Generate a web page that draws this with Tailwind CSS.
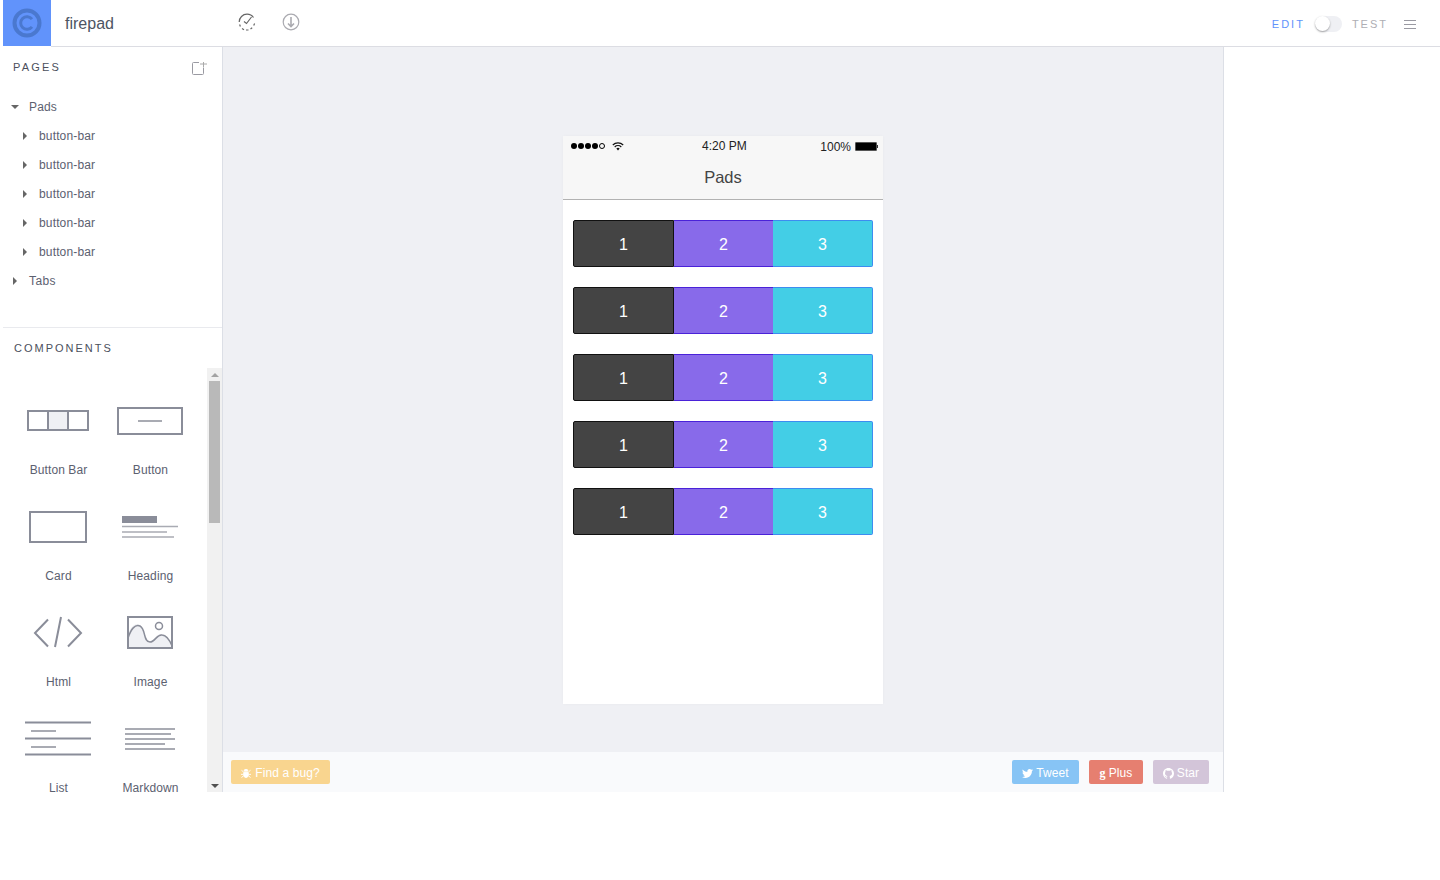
<!DOCTYPE html>
<html>

<head>
    <title>firepad</title>
    <script src="https://cdn.jsdelivr.net/npm/@tailwindcss/browser@4"></script>
</head>

<body class="bg-white font-['Liberation_Sans',Arial,sans-serif] overflow-hidden">
    <div class="h-[792px] w-[1440px] flex flex-col pl-[3px]">
        <!-- top bar -->
        <header class="h-[47px] flex shrink-0">
            <div class="w-[48px] h-[46px] bg-[#6193fb] flex items-center justify-center shrink-0">
                <svg width="30" height="30" viewBox="0 0 30 30" fill="none" stroke="#4a78cf">
                    <circle cx="15" cy="15" r="12.5" stroke-width="4"></circle>
                    <path d="M20 11.2a6.3 6.3 0 1 0 0 7.6" stroke-width="3"></path>
                </svg>
            </div>
            <div class="flex-1 flex items-center h-[47px] border-b border-[#dcdde3] pt-[2px]">
                <span class="ml-[14px] w-[173px] text-[16px] text-[#4d5563] -mt-[1px]">firepad</span>
                <svg class="-mt-[4px]" width="18" height="18" viewBox="0 0 18 18" fill="none" stroke="#666" stroke-width="1.2">
                    <path d="M15.5 4.5A7.8 7.8 0 0 0 9 1.2"></path>
                    <path d="M9 1.2a7.8 7.8 0 0 0-7.8 7.8"></path>
                    <path d="M1.6 11.5l.8 2M4 15.5l2 1.2M8 17h2.500M12.500 16l1.700-1.200M15.700 12.500l.900-2" stroke-dasharray="3 1.500"></path>
                    <path d="M6 8.500l2.500 2 5-6.500"></path>
                </svg>
                <svg class="ml-[26px] -mt-[5px]" width="18" height="18" viewBox="0 0 18 18" fill="none" stroke="#aaaab0" stroke-width="1.2">
                    <circle cx="9" cy="9" r="7.800"></circle>
                    <path d="M9 4v9M6 10.500L9 13.500l3-3" stroke-width="1.600"></path>
                </svg>
                <div class="ml-auto flex items-center">
                    <span class="text-[11px] tracking-[2px] text-[#6193fb]">EDIT</span>
                    <div class="ml-[10px] w-[27px] h-[16px] rounded-full bg-[#eff0f4] relative">
                        <div class="absolute left-0 top-0 w-[15px] h-[15px] rounded-full bg-white shadow-[0_1px_2px_rgba(0,0,0,0.35)]"></div>
                    </div>
                    <span class="ml-[10px] text-[11px] tracking-[2px] text-[#aeaeb4]">TEST</span>
                    <div class="ml-[16px] mr-[24px] w-[12px] flex flex-col gap-[3px]">
                        <div class="h-px bg-[#9a9aa2]"></div>
                        <div class="h-px bg-[#9a9aa2]"></div>
                        <div class="h-px bg-[#9a9aa2]"></div>
                    </div>
                </div>
            </div>
        </header>

        <div class="flex flex-1 min-h-0">
            <!-- sidebar -->
            <aside class="w-[220px] shrink-0 border-r border-[#dcdfe6] flex flex-col">
                <section class="h-[281px] shrink-0 border-b border-[#e9eaee]">
                    <div class="h-[40px] flex items-center justify-between pl-[10px] pr-[15px]">
                        <span class="text-[11px] tracking-[2.200px] text-[#4b4f5c]">PAGES</span>
                        <svg width="16" height="16" viewBox="0 0 16 16" fill="none" stroke="#9a9aa2">
                            <path d="M8 3.500H2.500a1 1 0 0 0-1 1V14.500a1 1 0 0 0 1 1H11.500a1 1 0 0 0 1-1V8.500"></path>
                            <path d="M12.500 3v5M9 5h7" stroke="#aaa"></path>
                        </svg>
                    </div>
                    <ul class="mt-[5px] text-[12px] tracking-[0.15px] text-[#5c6170]">
                        <li class="h-[29px] flex items-center">
                            <svg class="ml-[8px]" width="8" height="4" viewBox="0 0 8 4"><path d="M0 0h8L4 4z" fill="#666"></path></svg>
                            <span class="ml-[10px]">Pads</span>
                        </li>
                        <li class="h-[29px] flex items-center">
                            <svg class="ml-[20px]" width="4" height="8" viewBox="0 0 4 8"><path d="M0 0l4 4-4 4z" fill="#666"></path></svg>
                            <span class="ml-[12px]">button-bar</span>
                        </li>
                        <li class="h-[29px] flex items-center">
                            <svg class="ml-[20px]" width="4" height="8" viewBox="0 0 4 8"><path d="M0 0l4 4-4 4z" fill="#666"></path></svg>
                            <span class="ml-[12px]">button-bar</span>
                        </li>
                        <li class="h-[29px] flex items-center">
                            <svg class="ml-[20px]" width="4" height="8" viewBox="0 0 4 8"><path d="M0 0l4 4-4 4z" fill="#666"></path></svg>
                            <span class="ml-[12px]">button-bar</span>
                        </li>
                        <li class="h-[29px] flex items-center">
                            <svg class="ml-[20px]" width="4" height="8" viewBox="0 0 4 8"><path d="M0 0l4 4-4 4z" fill="#666"></path></svg>
                            <span class="ml-[12px]">button-bar</span>
                        </li>
                        <li class="h-[29px] flex items-center">
                            <svg class="ml-[20px]" width="4" height="8" viewBox="0 0 4 8"><path d="M0 0l4 4-4 4z" fill="#666"></path></svg>
                            <span class="ml-[12px]">button-bar</span>
                        </li>
                        <li class="h-[29px] flex items-center">
                            <svg class="ml-[10px]" width="4" height="8" viewBox="0 0 4 8"><path d="M0 0l4 4-4 4z" fill="#666"></path></svg>
                            <span class="ml-[12px] tracking-[0.4px]">Tabs</span>
                        </li>
                    </ul>
                </section>

                <section class="flex-1 min-h-0 flex flex-col">
                    <div class="h-[40px] shrink-0 flex items-center pl-[11px]">
                        <span class="text-[11px] tracking-[2px] text-[#4b4f5c]">COMPONENTS</span>
                    </div>
                    <div class="flex-1 min-h-0 flex">
                        <div class="flex-1 pl-[10px] pt-[22px] h-[424px]">
                            <div class="grid grid-cols-[92px_92px] auto-rows-[106px] text-[12px] tracking-[0.1px] text-[#5c6170] text-center">
                                <div>
                                    <svg width="92" height="60" viewBox="13 390 92 60" fill="none" stroke="#8a8d99" stroke-width="2">
                                        <rect x="48" y="411" width="20" height="19" fill="#eff0f4" stroke="none"></rect>
                                        <rect x="28" y="411" width="60" height="19"></rect>
                                        <path d="M48 411v19M68 411v19"></path>
                                    </svg>
                                    <p class="mt-[15px] leading-[10px] pr-px">Button Bar</p>
                                </div>
                                <div>
                                    <svg width="92" height="60" viewBox="105 390 92 60" fill="none" stroke="#8a8d99" stroke-width="2">
                                        <rect x="118" y="408" width="64" height="26"></rect>
                                        <path d="M138 421h24" stroke="#a9abb3"></path>
                                    </svg>
                                    <p class="mt-[15px] leading-[10px] pr-px">Button</p>
                                </div>
                                <div>
                                    <svg width="92" height="60" viewBox="13 496 92 60" fill="none" stroke="#8a8d99" stroke-width="2">
                                        <rect x="30" y="512" width="56" height="30"></rect>
                                    </svg>
                                    <p class="mt-[15px] leading-[10px] pr-px">Card</p>
                                </div>
                                <div>
                                    <svg width="92" height="60" viewBox="105 496 92 60" fill="none" stroke="#a9abb3" stroke-width="1.500">
                                        <rect x="122" y="516" width="35" height="7" fill="#8a8d99" stroke="none"></rect>
                                        <path d="M122 526.500h56M122 532h45M122 537h52"></path>
                                    </svg>
                                    <p class="mt-[15px] leading-[10px] pr-px">Heading</p>
                                </div>
                                <div>
                                    <svg width="92" height="60" viewBox="13 602 92 60" fill="none" stroke="#8a8d99" stroke-width="2">
                                        <path d="M48 619.500L35 633l13 13.500M68 619.500L81 633l-13 13.500M61 617l-6 30"></path>
                                    </svg>
                                    <p class="mt-[15px] leading-[10px] pr-px">Html</p>
                                </div>
                                <div>
                                    <svg width="92" height="60" viewBox="105 602 92 60" fill="none" stroke="#8a8d99" stroke-width="2">
                                        <path d="M128 648v-14c3-8 8-12 12-9 5 4 3 14 9 16 5 1 7-7 12-7 5 0 9 5 10 14z" fill="#eff0f4" stroke="none"></path>
                                        <rect x="128" y="617" width="44" height="31"></rect>
                                        <path d="M128 638c3-9 7-14 12-12 6 3 3 16 10 16 5 0 7-8 12-7 5 0 8 6 10 11" stroke-width="1.500"></path>
                                        <circle cx="159" cy="626" r="3.500" stroke-width="1.500"></circle>
                                    </svg>
                                    <p class="mt-[15px] leading-[10px] pr-px">Image</p>
                                </div>
                                <div>
                                    <svg width="92" height="60" viewBox="13 708 92 60" fill="none" stroke="#8a8d99" stroke-width="2">
                                        <path d="M25 722.500h66M25 738.500h66M25 754.500h66"></path>
                                        <path d="M31 731h25M31 747h25" stroke="#a9abb3"></path>
                                    </svg>
                                    <p class="mt-[15px] leading-[10px] pr-px">List</p>
                                </div>
                                <div>
                                    <svg width="92" height="60" viewBox="105 708 92 60" fill="none" stroke="#a9abb3" stroke-width="1.800">
                                        <path d="M125 729h50M125 734h46M125 739h50M125 744h40M125 749h50"></path>
                                    </svg>
                                    <p class="mt-[15px] leading-[10px] pr-px">Markdown</p>
                                </div>
                            </div>
                        </div>
                        <!-- scrollbar -->
                        <div class="w-[15px] shrink-0 bg-[#f1f1f1] flex flex-col items-center">
                            <div class="h-[13px] flex items-center justify-center">
                                <svg width="8" height="4" viewBox="0 0 8 4"><path d="M0 4l4-4 4 4z" fill="#a3a3a3"></path></svg>
                            </div>
                            <div class="w-[11px] h-[142px] bg-[#b9b9b9]"></div>
                            <div class="mt-auto h-[13px] flex items-center justify-center">
                                <svg width="8" height="4" viewBox="0 0 8 4"><path d="M0 0l4 4 4-4z" fill="#505050"></path></svg>
                            </div>
                        </div>
                    </div>
                </section>
            </aside>

            <!-- canvas -->
            <main class="w-[1000px] shrink-0 bg-[#eff0f4] flex flex-col">
                <div class="flex-1 min-h-0 flex justify-center items-start pt-[89px]">
                    <div class="w-[320px] h-[568px] bg-white shadow-[0_0_3px_rgba(0,0,0,0.03)]">
                        <div class="h-[64px] bg-[#f7f7f7] border-b border-[#b2b2b2]">
                            <div class="h-[20px] pl-[8px] pr-[5px] flex items-center justify-between relative text-[12px] text-[#222]">
                                <div class="flex items-center gap-[1px] w-[60px]">
                                    <span class="w-[6px] h-[6px] rounded-full bg-black"></span>
                                    <span class="w-[6px] h-[6px] rounded-full bg-black"></span>
                                    <span class="w-[6px] h-[6px] rounded-full bg-black"></span>
                                    <span class="w-[6px] h-[6px] rounded-full bg-black"></span>
                                    <span class="w-[6px] h-[6px] rounded-full border border-black"></span>
                                    <svg class="ml-[6px]" width="12" height="9" viewBox="0 0 12 9" fill="none" stroke="#111" stroke-width="1.200">
                                        <path d="M.8 3a7.500 7.500 0 0 1 10.400 0M2.700 5a4.800 4.800 0 0 1 6.600 0"></path>
                                        <path d="M4.300 6.600a2.400 2.400 0 0 1 3.400 0L6 8.500z" fill="#111" stroke="none"></path>
                                    </svg>
                                </div>
                                <span class="absolute left-[139px]">4:20 PM</span>
                                <div class="flex items-center gap-[4px]">
                                    <span class="mt-px">100%</span>
                                    <div class="flex items-center">
                                        <div class="w-[22px] h-[9px] bg-black border border-[#555] rounded-[1px]"></div>
                                        <div class="w-px h-[3px] bg-[#333]"></div>
                                    </div>
                                </div>
                            </div>
                            <div class="h-[43px] flex items-center justify-center text-[16.500px] text-[#444]">Pads</div>
                        </div>
                        <div class="px-[10px] pt-[20px] flex flex-col gap-[20px] text-[16px] text-white">
                            <div class="flex h-[47px] text-center leading-[47px]">
                                <div class="w-[101px] bg-[#444] border border-[#111] rounded-l-[2px]">1</div>
                                <div class="w-[99px] bg-[#886aea] border-y border-[#4a22d8]">2</div>
                                <div class="w-[100px] bg-[#43cee6] border border-l-0 border-[#3d8cf0] rounded-r-[2px]">3</div>
                            </div>
                            <div class="flex h-[47px] text-center leading-[47px]">
                                <div class="w-[101px] bg-[#444] border border-[#111] rounded-l-[2px]">1</div>
                                <div class="w-[99px] bg-[#886aea] border-y border-[#4a22d8]">2</div>
                                <div class="w-[100px] bg-[#43cee6] border border-l-0 border-[#3d8cf0] rounded-r-[2px]">3</div>
                            </div>
                            <div class="flex h-[47px] text-center leading-[47px]">
                                <div class="w-[101px] bg-[#444] border border-[#111] rounded-l-[2px]">1</div>
                                <div class="w-[99px] bg-[#886aea] border-y border-[#4a22d8]">2</div>
                                <div class="w-[100px] bg-[#43cee6] border border-l-0 border-[#3d8cf0] rounded-r-[2px]">3</div>
                            </div>
                            <div class="flex h-[47px] text-center leading-[47px]">
                                <div class="w-[101px] bg-[#444] border border-[#111] rounded-l-[2px]">1</div>
                                <div class="w-[99px] bg-[#886aea] border-y border-[#4a22d8]">2</div>
                                <div class="w-[100px] bg-[#43cee6] border border-l-0 border-[#3d8cf0] rounded-r-[2px]">3</div>
                            </div>
                            <div class="flex h-[47px] text-center leading-[47px]">
                                <div class="w-[101px] bg-[#444] border border-[#111] rounded-l-[2px]">1</div>
                                <div class="w-[99px] bg-[#886aea] border-y border-[#4a22d8]">2</div>
                                <div class="w-[100px] bg-[#43cee6] border border-l-0 border-[#3d8cf0] rounded-r-[2px]">3</div>
                            </div>
                        </div>
                    </div>
                </div>
                <div class="h-[40px] shrink-0 bg-[#f9fafc] flex items-center pl-[8px] pr-[14px] text-[12px] tracking-[0.1px] text-white">
                    <a class="w-[99px] h-[24px] pt-[2px] bg-[#f9d58f] rounded-[2px] flex items-center justify-center gap-[4px]">
                        <svg width="10" height="10" viewBox="0 0 11 11" fill="#fff" stroke="#fff">
                            <path d="M3 5h5v2.500a2.500 3 0 0 1-5 0z"></path>
                            <path d="M3.500 3a2 1.500 0 0 1 4 0v.500h-4z"></path>
                            <path d="M0.500 2.500L3 4.500M10.500 2.500L8 4.500M0 7h3M11 7H8M.5 10.500L3 8.500M10.500 10.500L8 8.500"></path>
                        </svg>
                        Find a bug?
                    </a>
                    <a class="ml-auto w-[67px] h-[24px] pt-[2px] bg-[#87c4f5] rounded-[2px] flex items-center justify-center gap-[3px]">
                        <svg width="11" height="11" viewBox="0 0 24 24" fill="#fff"><path d="M23.953 4.570a10 10 0 01-2.825.775 4.958 4.958 0 002.163-2.723c-.951.555-2.005.959-3.127 1.184a4.920 4.920 0 00-8.384 4.482C7.690 8.095 4.067 6.130 1.640 3.162a4.822 4.822 0 00-.666 2.475c0 1.710.870 3.213 2.188 4.096a4.904 4.904 0 01-2.228-.616v.060a4.923 4.923 0 003.946 4.827 4.996 4.996 0 01-2.212.085 4.936 4.936 0 004.604 3.417 9.867 9.867 0 01-6.102 2.105c-.390 0-.779-.023-1.170-.067a13.995 13.995 0 007.557 2.209c9.053 0 13.998-7.496 13.998-13.985 0-.210 0-.420-.015-.630A9.935 9.935 0 0024 4.590z"></path></svg>
                        Tweet
                    </a>
                    <a class="ml-[10px] w-[54px] h-[24px] pt-[2px] bg-[#e67f70] rounded-[2px] flex items-center justify-center gap-[3px]">
                        <span class="font-['Liberation_Serif',serif] font-bold">g</span>
                        Plus
                    </a>
                    <a class="ml-[10px] w-[56px] h-[24px] pt-[2px] bg-[#d3c5d9] rounded-[2px] flex items-center justify-center gap-[3px]">
                        <svg width="11" height="11" viewBox="0 0 16 16" fill="#fff"><path d="M8 0C3.580 0 0 3.580 0 8c0 3.540 2.290 6.530 5.470 7.590.400.070.550-.170.550-.380 0-.190-.010-.820-.010-1.490-2.010.370-2.530-.490-2.690-.940-.090-.230-.480-.940-.820-1.130-.280-.150-.680-.520-.010-.530.630-.010 1.080.580 1.230.820.720 1.210 1.870.870 2.330.660.070-.520.280-.870.510-1.070-1.780-.200-3.640-.890-3.640-3.950 0-.870.310-1.590.820-2.150-.080-.200-.360-1.020.080-2.120 0 0 .670-.210 2.200.820.640-.180 1.320-.270 2-.270.680 0 1.360.090 2 .270 1.530-1.040 2.200-.820 2.200-.820.440 1.100.160 1.920.080 2.120.510.560.820 1.270.820 2.150 0 3.070-1.870 3.750-3.650 3.950.290.250.540.730.540 1.480 0 1.070-.010 1.930-.010 2.200 0 .210.150.460.550.380A8.013 8.013 0 0016 8c0-4.420-3.58-8-8-8z"></path></svg>
                        Star
                    </a>
                </div>
            </main>
            <div class="w-px h-full bg-[#dcdfe6] shrink-0"></div>
        </div>
    </div>
</body>

</html>
